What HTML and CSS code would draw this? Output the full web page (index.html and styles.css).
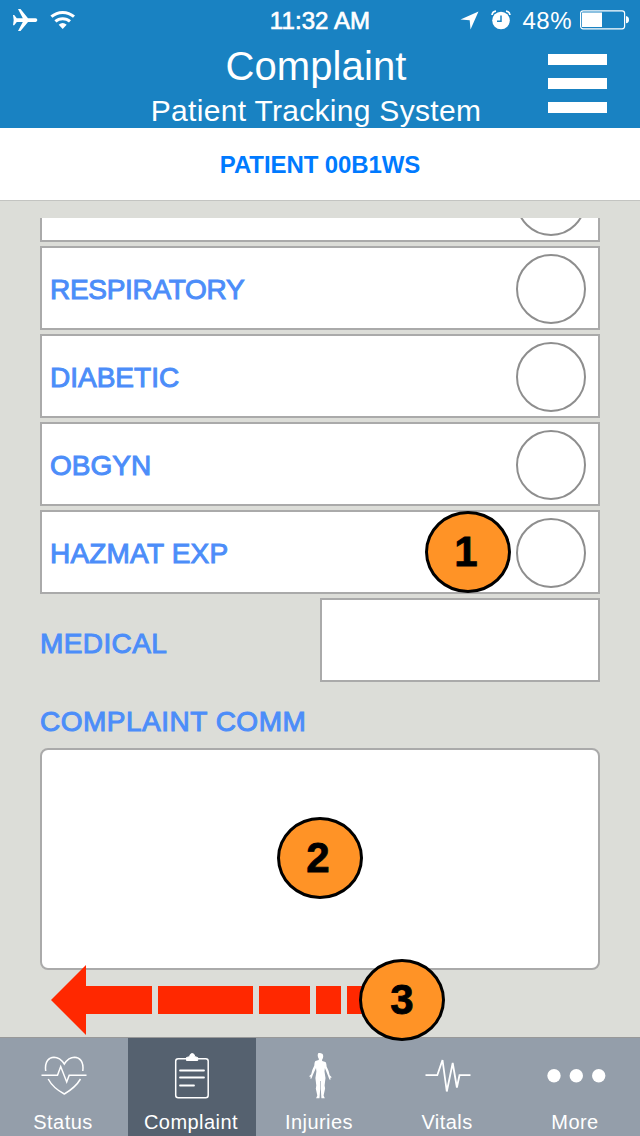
FILE: index.html
```html
<!DOCTYPE html>
<html lang="en">
<head>
<meta charset="utf-8">
<title>Complaint - Patient Tracking System</title>
<link rel="stylesheet" href="styles.css">
</head>
<body>
<div class="screen">
  <header class="header">
    <div class="status">
      <div class="status-left">
        <svg width="25" height="24" viewBox="0 0 25 24" fill="#fff"><path d="M0 7h1.200l2.600 3.200h6L5 1h2.500L15 10.200h7.500c2.400 0 2.400 3.700 0 3.700H15L7.500 23H5l4.800-9.100h-6L1.200 17.200H0l.7-5.100z"/></svg>
        <svg width="26" height="20" viewBox="0 0 26 20" fill="none" stroke="#fff"><path d="M1.400 6.700a17 17 0 0 1 22.600 0" stroke-width="3"/><path d="M5.400 11.400a11 11 0 0 1 14.600 0" stroke-width="3"/><path d="M8.700 14.800a6.200 6.200 0 0 1 8 0L12.700 19z" fill="#fff" stroke="none"/></svg>
      </div>
      <div class="time">11:32 AM</div>
      <div class="status-right">
        <svg class="location" width="19" height="19" viewBox="0 0 19 19"><path d="M18.500.5L10.500 18.500 9.700 9.200.5 8.500z" fill="#fff"/></svg>
        <svg class="alarm" width="20" height="20" viewBox="0 0 20 20"><circle cx="10" cy="10.500" r="8.800" fill="#fff"/><path d="M1 5Q1.500 1.500 5 1.200M19 5Q18.500 1.500 15 1.200" fill="none" stroke="#fff" stroke-width="1.700"/><path d="M10 5.500v5.800H6" fill="none" stroke="#1982c2" stroke-width="1.500"/></svg>
        <span class="percent">48%</span>
        <svg class="battery" width="50" height="20" viewBox="0 0 50 20"><rect x=".6" y=".8" width="44" height="18" rx="2.500" fill="none" stroke="#fff" stroke-width="1.200"/><path d="M2 2.500h20V17H2z" fill="#fff"/><path d="M46 6q3 .5 3 3.700T46 13.300z" fill="#fff"/></svg>
      </div>
    </div>
    <div class="heading">
      <h1 class="title">Complaint</h1>
      <div class="subtitle">Patient Tracking System</div>
      <div class="menu"><i class="menu-bar"></i><i class="menu-bar"></i><i class="menu-bar"></i></div>
    </div>
  </header>
  <div class="patient"><span class="patient-id">PATIENT 00B1WS</span></div>
  <main class="content">
    <div class="row row-clipped"><span class="radio"></span></div>
    <div class="row"><span class="label respiratory">RESPIRATORY</span><span class="radio"></span></div>
    <div class="row"><span class="label diabetic">DIABETIC</span><span class="radio"></span></div>
    <div class="row"><span class="label obgyn">OBGYN</span><span class="radio"></span></div>
    <div class="row"><span class="label hazmat">HAZMAT EXP</span><span class="radio"></span></div>
    <div class="medical"><span class="label medical-label">MEDICAL</span><div class="field"></div></div>
    <div class="comments-title"><span class="label comments-label">COMPLAINT COMM</span></div>
    <div class="comments"></div>
  </main>
  <nav class="tabs">
    <div class="tab">
      <svg width="48" height="48" viewBox="0 0 48 48" fill="none" stroke="#fff" stroke-width="1.500"><path d="M5.700 18C4.500 8 9 4.500 14 4.200c5 0 7.500 2.500 10.300 6.800C27 6.700 29.500 4.200 34.500 4.200 39.500 4.500 44 8 42.800 18M1.500 22.200h16l3.200-8.600 6 15.400 2.500-6.800h17.300M8.200 26Q13 35 24.300 41 35.500 34.500 40.500 26"/></svg>
      <span class="tab-name">Status</span>
    </div>
    <div class="tab active">
      <svg width="48" height="48" viewBox="0 0 48 48" fill="none" stroke="#fff" stroke-width="1.500"><rect x="7.700" y="5.700" width="32.500" height="39" rx="2.500"/><path d="M12 17.500h24M12 24.500h24M12 32.500h14" stroke-width="1.800" stroke-linecap="round"/><path d="M18.500 7.500V4.500l3-.8q.6-3.200 2.700-3.200t2.700 3.200l2.800.8v3z" fill="#fff" stroke-width="1"/></svg>
      <span class="tab-name">Complaint</span>
    </div>
    <div class="tab">
      <svg width="48" height="48" viewBox="0 0 48 48" fill="#fff"><path d="M24.500.3c2 0 2.800 1.300 2.700 3.300-.1 1.700-.7 2.500-1.200 3.300l.2 1.100 3.200 1q1 .5 1.200 4.500l2 4.500 1.100 4.200 1.800 1.700-.3 1.100-.9-.4.200 2.100-1.100-.2-1.300-3.500L28.900 15l-.4 3.500 1 6.500-.9 7.500.5 3-1.500 7 1.200 2.800h-3.400L24.800 36V28h-.6v8l-.7 9.300h-3.400l1.200-2.800-1.500-7 .5-3-.9-7.500 1-6.500-.4-3.500-3.200 7-1.300 3.500-1.100.2.200-2.100-.9.400-.3-1.100 1.800-1.700 1.100-4.200 2-4.500q.2-4 1.200-4.500l3.200-1 .2-1.100c-.5-.8-1.100-1.600-1.200-3.300-.1-2 .7-3.300 2.700-3.300z"/></svg>
      <span class="tab-name">Injuries</span>
    </div>
    <div class="tab">
      <svg width="48" height="48" viewBox="0 0 48 48" fill="none" stroke="#fff" stroke-width="1.800"><path d="M1.500 22.200h11.800L18.500 7l4.300 31.500L28.700 10l4.200 24.500 2.600-12.300h11"/></svg>
      <span class="tab-name">Vitals</span>
    </div>
    <div class="tab">
      <svg width="62" height="48" viewBox="0 0 62 48" fill="#fff"><circle cx="9" cy="22.700" r="6.700"/><circle cx="31.300" cy="22.700" r="6.700"/><circle cx="53.700" cy="22.700" r="6.700"/></svg>
      <span class="tab-name">More</span>
    </div>
  </nav>
  <svg class="swipe" width="312" height="70" viewBox="0 0 312 70" fill="#ff2800"><path d="M0 35L35 0v21h66v28H35v21zM107 21h95v28h-95zM208 21h51v28h-51zM265 21h25v28h-25zM296 21h16v28h-16z"/></svg>
  <div class="marker marker-one">1</div>
  <div class="marker marker-two">2</div>
  <div class="marker marker-three">3</div>
</div>
</body>
</html>
```
FILE: styles.css
```css
* { box-sizing: border-box; }
body { margin: 0; font-family: "Liberation Sans", Arial, sans-serif; }
svg { display: block; flex: none; }
.screen { position: relative; width: 640px; height: 1136px; display: flex; flex-direction: column; overflow: hidden; background: #dcddd8; }

.header { height: 128px; background: #1982c2; color: #fff; }
.status { height: 40px; display: grid; grid-template-columns: 220px 200px 220px; align-items: center; }
.status-left { display: flex; align-items: center; gap: 12px; padding-left: 13px; }
.time { text-align: center; font-size: 24px; line-height: 28px; padding-top: 2px; letter-spacing: .1px; -webkit-text-stroke: .7px #fff; }
.status-right { display: flex; align-items: center; justify-content: flex-end; padding-right: 10px; }
.location { margin-right: 12px; }
.alarm { margin-right: 11px; }
.percent { font-size: 24px; line-height: 28px; padding-top: 2px; letter-spacing: .5px; margin-right: 8px; }
.heading { position: relative; height: 88px; text-align: center; }
.title { margin: 0; font-size: 40px; font-weight: 400; line-height: 53px; letter-spacing: .1px; padding-right: 8px; }
.subtitle { font-size: 30px; line-height: 36px; letter-spacing: .3px; padding-right: 8px; }
.menu { position: absolute; left: 548px; top: 14px; width: 59px; display: flex; flex-direction: column; gap: 13px; }
.menu-bar { height: 11px; background: #fff; }

.patient { height: 73px; display: flex; align-items: center; justify-content: center; background: #fff; border-bottom: 1px solid #c3c4c1; }
.patient-id { color: #007aff; font-size: 24px; font-weight: 700; line-height: 28px; padding-top: 2px; letter-spacing: -.1px; }

.content { flex: 1; padding: 17px 40px 0; display: flex; flex-direction: column; gap: 4px; }
.row { height: 84px; flex: none; display: flex; align-items: center; justify-content: space-between; padding: 0 12px 0 8px; background: #fff; border: 2px solid #aaa; }
.row-clipped { height: 24px; border-top: 0; justify-content: flex-end; align-items: flex-end; padding-bottom: 4px; overflow: hidden; }
.radio { width: 70px; height: 70px; flex: none; border: 2px solid #8e8e8e; border-radius: 50%; margin-top: 2px; }
.label { font-size: 28px; line-height: 32px; color: #4c8df9; -webkit-text-stroke: 1px #4c8df9; padding-top: 4px; white-space: nowrap; }
.respiratory { letter-spacing: -.3px; }
.hazmat { letter-spacing: .2px; }
.medical { height: 84px; flex: none; display: grid; grid-template-columns: 1fr 1fr; align-items: center; }
.medical-label { padding-top: 8px; letter-spacing: .4px; }
.field { height: 84px; background: #fff; border: 2px solid #aaa; }
.comments-title { height: 58px; flex: none; display: flex; align-items: center; padding-top: 10px; }
.comments-label { letter-spacing: .5px; }
.comments { height: 222px; flex: none; background: #fff; border: 2px solid #aaa; border-radius: 8px; }

.tabs { height: 99px; flex: none; display: grid; grid-template-columns: repeat(5, 1fr); border-top: 1px solid #999; background: #949eaa; color: #fff; }
.tab { display: flex; flex-direction: column; align-items: center; padding: 15px 1px 0 0; }
.active { background: #55616f; }
.tab-name { font-size: 20px; line-height: 24px; padding: 9px 1px 0 0; letter-spacing: .45px; }

.swipe { position: absolute; left: 51px; top: 965px; }
.marker { position: absolute; width: 86px; height: 82px; border: 3px solid #000; border-radius: 50%; background: #ff9326; color: #000; font-size: 42px; font-weight: 700; line-height: 76px; text-align: center; padding-right: 4px; -webkit-text-stroke: .8px #000; }
.marker-one { left: 425px; top: 511px; }
.marker-two { left: 277px; top: 817px; }
.marker-three { left: 359px; top: 959px; padding-right: 0; }
```
